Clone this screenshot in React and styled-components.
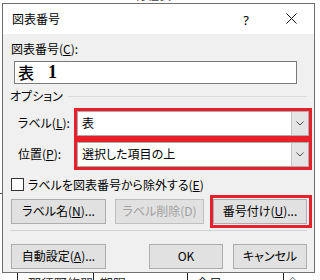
import React from "react";
import styled, { createGlobalStyle } from "styled-components";

const Global = createGlobalStyle`
  html, body { margin: 0; padding: 0; background: #fff; }
  body { width: 320px; height: 280px; overflow: hidden; }
  * { box-sizing: border-box; }
`;

const FONT = `"Noto Sans CJK JP", "Noto Sans", sans-serif`;

const Page = styled.div`
  width: 320px;
  height: 280px;
  display: flex;
  flex-direction: column;
  font-family: ${FONT};
  font-feature-settings: "palt";
  font-size: 12px;
  color: #000;
  overflow: hidden;
`;

const TopStrip = styled.div`
  height: 3px;
  overflow: hidden;
  padding-left: 135px;
  line-height: 12px;
  font-size: 12px;
  color: #444;
`;

const TopText = styled.div`
  margin-top: -11px;
`;

const Middle = styled.div`
  display: flex;
  height: 270px;
`;

const LeftStrip = styled.div`
  width: 2px;
  display: flex;
  flex-direction: column;
`;

const LeftTick = styled.div`
  margin-top: 190px;
  height: 1px;
  background: #555;
`;

const Dialog = styled.div`
  width: 313px;
  height: 270px;
  border: 1px solid #6f6f6f;
  display: flex;
  flex-direction: column;
  background: #f0f0f0;
`;

const TitleBar = styled.div`
  height: 30px;
  background: #fff;
  display: flex;
  align-items: center;
  padding-left: 9px;
  font-size: 12px;
`;

const Title = styled.span`
  line-height: 16px;
`;

const Help = styled.span`
  margin-left: auto;
  font-family: "Noto Sans", sans-serif;
  font-size: 13px;
  line-height: 16px;
  margin-top: 2px;
`;

const Close = styled.svg`
  margin-left: 37px;
  margin-right: 17px;
  width: 11px;
  height: 11px;
`;

const Content = styled.div`
  flex: 1;
  display: flex;
  flex-direction: column;
  padding: 7px 7px 0 8px;
`;

const Label = styled.div`
  line-height: 16px;
  height: 16px;
  white-space: nowrap;
`;

const TextInput = styled.div`
  margin-top: 4px;
  margin-left: 3px;
  width: 283px;
  height: 23px;
  background: #fff;
  border: 1px solid #7a7a7a;
  display: flex;
  align-items: center;
  padding-left: 3px;
`;

const InputKanji = styled.span`
  font-size: 16px;
  font-weight: 500;
  line-height: 20px;
`;

const InputNum = styled.span`
  font-family: "Liberation Serif", serif;
  font-weight: bold;
  font-size: 18px;
  line-height: 20px;
  margin-left: 14px;
`;

const GroupHeader = styled.div`
  margin-top: 4px;
  margin-left: -1px;
  height: 16px;
  display: flex;
  align-items: center;
`;

const GroupLine = styled.div`
  flex: 1;
  height: 1px;
  margin-left: 5px;
  margin-top: 1px;
  background: #dcdcdc;
`;

const FieldRow = styled.div`
  display: flex;
  align-items: center;
  margin-top: ${(p) => p.$mt || 0}px;
  margin-right: -5px;
`;

const FieldLabel = styled.div`
  width: 63px;
  padding-left: 7px;
  line-height: 16px;
  white-space: nowrap;
`;

const RedBox = styled.div`
  border: 3px solid #e8202a;
  display: flex;
  padding: ${(p) => p.$pad || "0"};
  margin-left: ${(p) => p.$ml || 0}px;
`;

const Combo = styled.div`
  width: 232px;
  height: 25px;
  background: #fff;
  border: 1px solid #acacac;
  display: flex;
  align-items: center;
`;

const ComboText = styled.span`
  flex: 1;
  padding-left: 4px;
  line-height: 16px;
  white-space: nowrap;
`;

const DropButton = styled.div`
  width: 17px;
  align-self: stretch;
  background: #e5e5e5;
  border-left: 1px solid #c4c4c4;
  display: flex;
  align-items: center;
  justify-content: center;
`;

const CheckRow = styled.div`
  margin-top: 7px;
  height: 16px;
  display: flex;
  align-items: center;
`;

const CheckBox = styled.div`
  width: 13px;
  height: 13px;
  border: 1px solid #333;
  background: #fff;
  margin-right: 4px;
`;

const ButtonRow = styled.div`
  display: flex;
  align-items: center;
  margin-top: ${(p) => p.$mt}px;
  margin-right: ${(p) => p.$mr || 0}px;
  height: ${(p) => p.$h}px;
`;

const Button = styled.div`
  width: ${(p) => p.$w}px;
  height: 25px;
  margin-left: ${(p) => p.$ml || 0}px;
  background: #e1e1e1;
  border: 1px solid ${(p) => (p.$disabled ? "#bfbfbf" : "#adadad")};
  color: ${(p) => (p.$disabled ? "#a0a0a0" : "#000")};
  display: flex;
  align-items: center;
  justify-content: center;
  white-space: nowrap;
  line-height: 16px;
  font-size: 12px;
`;

const Separator = styled.div`
  margin-top: 2px;
  margin-left: -1px;
  height: 1px;
  background: #d5d5d5;
`;

const DocRow = styled.div`
  display: flex;
  height: 8px;
  overflow: hidden;
`;

const DocCell = styled.div`
  width: ${(p) => p.$w}px;
  border-left: ${(p) => (p.$first ? "none" : "1px solid #222")};
  padding-left: ${(p) => p.$pl || 0}px;
  font-size: 13px;
  line-height: 16px;
  color: #333;
  white-space: nowrap;
  overflow: hidden;
`;

const DocText = styled.div`
  margin-top: 2px;
`;

const U = styled.span`
  text-decoration: underline;
  text-underline-offset: 1px;
`;

const Chevron = () => (
  <svg width="8" height="5" viewBox="0 0 8 5">
    <path d="M0.5 0.5 L4 4 L7.5 0.5" fill="none" stroke="#505050" strokeWidth="1" />
  </svg>
);

export default function App() {
  return (
    <>
      <Global />
      <Page>
        <TopStrip>
          <TopText>行程表</TopText>
        </TopStrip>
        <Middle>
          <LeftStrip>
            <LeftTick />
          </LeftStrip>
          <Dialog>
            <TitleBar>
              <Title>図表番号</Title>
              <Help>?</Help>
              <Close viewBox="0 0 11 11">
                <path d="M0.5 0.5 L10.5 10.5 M10.5 0.5 L0.5 10.5" stroke="#111" strokeWidth="1" />
              </Close>
            </TitleBar>
            <Content>
              <Label>
                図表番号(<U>C</U>):
              </Label>
              <TextInput>
                <InputKanji>表</InputKanji>
                <InputNum>1</InputNum>
              </TextInput>
              <GroupHeader>
                <Label>オプション</Label>
                <GroupLine />
              </GroupHeader>
              <FieldRow $mt={4}>
                <FieldLabel>
                  ラベル(<U>L</U>):
                </FieldLabel>
                <RedBox>
                  <Combo>
                    <ComboText>表</ComboText>
                    <DropButton>
                      <Chevron />
                    </DropButton>
                  </Combo>
                </RedBox>
              </FieldRow>
              <FieldRow>
                <FieldLabel>
                  位置(<U>P</U>):
                </FieldLabel>
                <RedBox>
                  <Combo>
                    <ComboText>選択した項目の上</ComboText>
                    <DropButton>
                      <Chevron />
                    </DropButton>
                  </Combo>
                </RedBox>
              </FieldRow>
              <CheckRow>
                <CheckBox />
                <span>
                  ラベルを図表番号から除外する(<U>E</U>)
                </span>
              </CheckRow>
              <ButtonRow $mt={2} $h={33} $mr={-5}>
                <Button $w={95}>
                  ラベル名(<U>N</U>)...
                </Button>
                <Button $w={89} $ml={9} $disabled>
                  ラベル削除(D)
                </Button>
                <RedBox $pad="1px 2px 1px 0" $ml={6}>
                  <Button $w={94}>
                    番号付け(<U>U</U>)...
                  </Button>
                </RedBox>
              </ButtonRow>
              <Separator />
              <ButtonRow $mt={13} $h={25}>
                <Button $w={95}>
                  自動設定(<U>A</U>)...
                </Button>
                <Button $w={74} $ml={43}>
                  OK
                </Button>
                <Button $w={74} $ml={10}>
                  キャンセル
                </Button>
              </ButtonRow>
            </Content>
          </Dialog>
        </Middle>
        <DocRow>
          <DocCell $first $w={17} />
          <DocCell $w={76} $pl={10}>
            <DocText>那須野修習</DocText>
          </DocCell>
          <DocCell $w={94} $pl={6}>
            <DocText>期限</DocText>
          </DocCell>
          <DocCell $w={96} $pl={8}>
            <DocText>会日</DocText>
          </DocCell>
          <DocCell $w={37} $pl={2}>
            <DocText>◇</DocText>
          </DocCell>
        </DocRow>
      </Page>
    </>
  );
}
